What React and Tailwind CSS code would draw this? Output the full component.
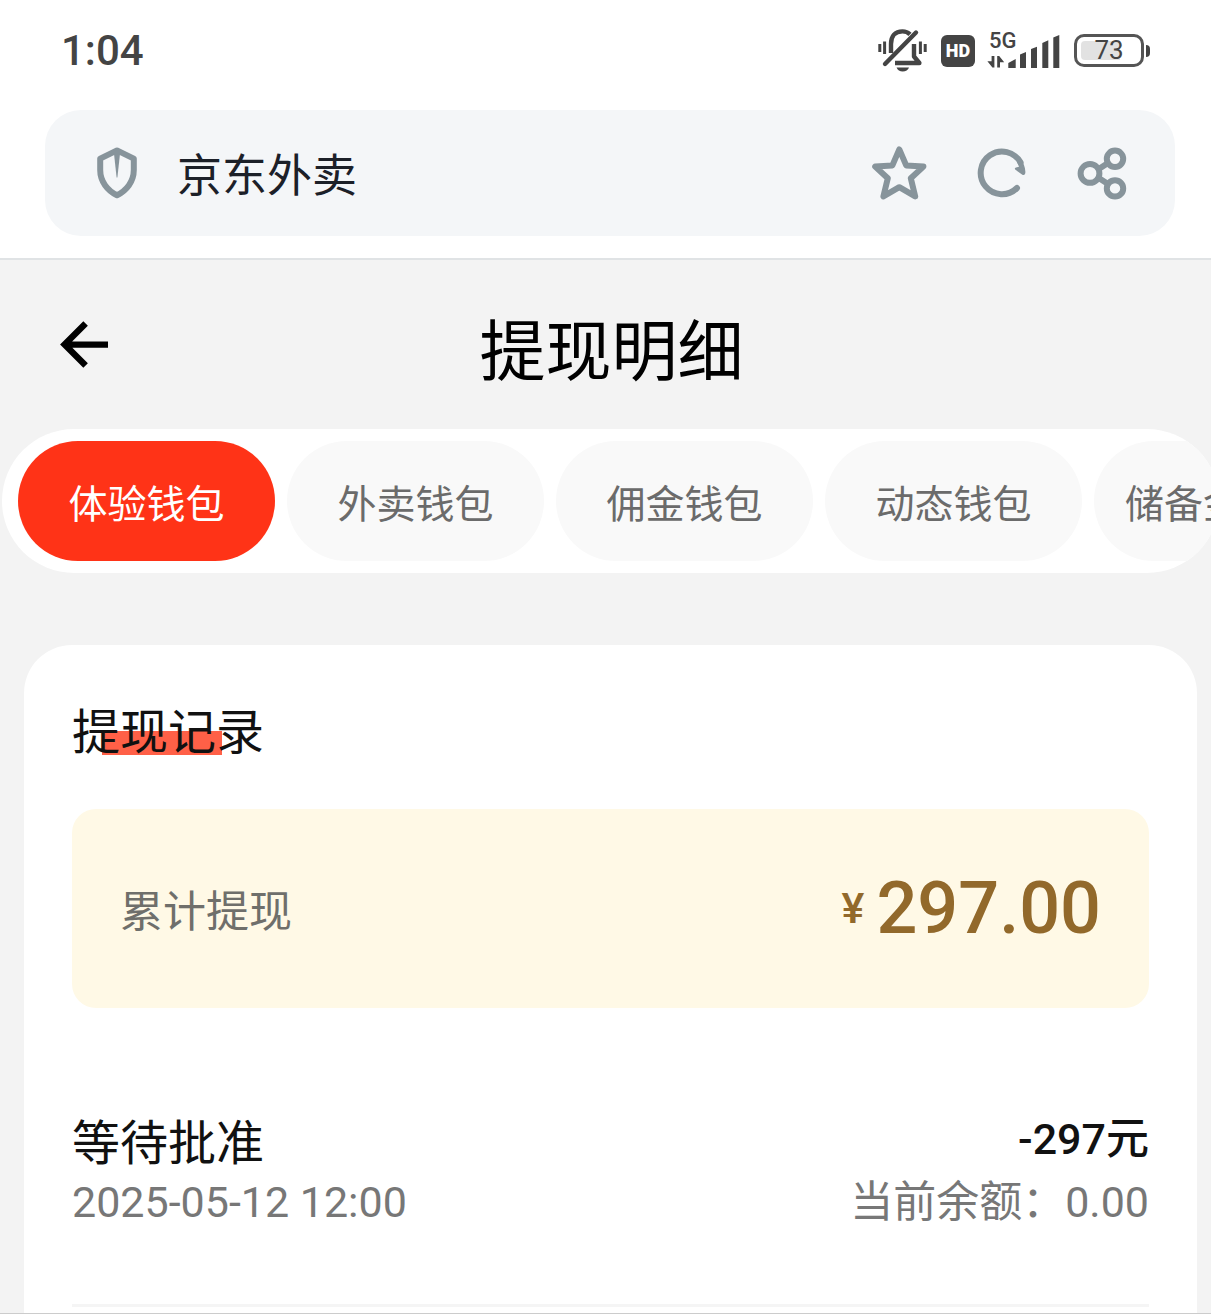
import { useState } from "react";

const wallets = ["体验钱包", "外卖钱包", "佣金钱包", "动态钱包", "储备金钱包"];

const records = [
  {
    id: 1,
    status: "等待批准",
    time: "2025-05-12 12:00",
    amount: "-297元",
    balance: "0.00",
  },
];

function MutedBellIcon() {
  return (
    <svg width="50" height="46" viewBox="0 0 50 46" fill="none" stroke="currentColor" strokeWidth="4.4" aria-hidden="true">
      <path d="M14 25V16C14 8 18 3.4 25.5 3.4C28.6 3.4 31 4.4 33 6.4" />
      <path d="M8 36L39 4.5" strokeLinecap="round" />
      <path d="M18 35H42.4L37 28.5V16" strokeLinejoin="round" />
      <path d="M19.5 39.5H32C31 42.2 28.8 43.6 25.7 43.6C22.7 43.6 20.6 42.2 19.5 39.5Z" fill="currentColor" stroke="none" />
      <path d="M7.6 13.5V26M43.4 13.5V26" strokeWidth="3" />
      <path d="M2.8 16V24M48.2 16V24" strokeWidth="3" />
    </svg>
  );
}

function SignalIcon() {
  return (
    <svg width="73" height="38" viewBox="0 0 73 38" fill="currentColor" aria-hidden="true">
      <path d="M21.3 31L28.7 27V36H21.3ZM33 22.5L39 20V36H33ZM44 17L50 14.7V36H44ZM55.3 11L61.3 8.3V36H55.3ZM66.3 5.5L72.3 3V36H66.3Z" />
      <path d="M4.6 24H7.4V35.5H5.4L0.4 29.2H4.6ZM10.2 24H12.2L17.2 30.3H13V35.5H10.2Z" />
    </svg>
  );
}

function ShieldIcon() {
  return (
    <svg width="40" height="52" viewBox="0 0 40 52" fill="none" stroke="currentColor" aria-hidden="true">
      <path d="M20 3.4L36.8 11.6V23C36.8 34.5 29.5 43.5 20 48.2C10.5 43.5 3.2 34.5 3.2 23V11.6Z" strokeWidth="6" strokeLinejoin="round" />
      <path d="M16.8 5H23.2L20.4 30.5H19.6Z" fill="currentColor" stroke="none" />
    </svg>
  );
}

function StarIcon() {
  return (
    <svg width="55" height="54" viewBox="0 0 55 54" fill="none" stroke="currentColor" strokeWidth="6" strokeLinejoin="round" aria-hidden="true">
      <path d="M27.3 3.4L34.2 19.4L51.4 20.6L38.8 32.2L43.2 50.4L27.3 41.2L11.4 50.4L15.8 32.2L3.2 20.6L20.4 19.4Z" />
    </svg>
  );
}

function RefreshIcon() {
  return (
    <svg width="50" height="50" viewBox="0 0 50 50" fill="none" stroke="currentColor" aria-hidden="true">
      <path d="M40 40A21.3 21.3 0 1 1 43.6 14.5" strokeWidth="6" strokeLinecap="round" />
      <path d="M43.5 10.5C46.4 14.5 48.2 19 48.4 24C48.4 26.8 46.8 27.6 45 26.4L38.4 21.8C37.4 20.8 37.8 19.6 39 19.4L42 18.8L40 14Z" fill="currentColor" stroke="none" />
    </svg>
  );
}

function ShareIcon() {
  return (
    <svg width="50" height="53" viewBox="0 0 50 53" fill="none" stroke="currentColor" strokeWidth="6" aria-hidden="true">
      <circle cx="13" cy="26.4" r="9.4" />
      <circle cx="38" cy="11.8" r="8.2" />
      <circle cx="38" cy="41.4" r="8.2" />
      <path d="M21 22.5L31 16M21 30.5L31 37" />
    </svg>
  );
}

function BackIcon() {
  return (
    <svg width="48" height="48" viewBox="0 0 48 48" fill="none" stroke="currentColor" strokeWidth="6.4" aria-hidden="true">
      <path d="M25.6 2.6L4.6 23.6L25.6 44.6M5 23.6H48" />
    </svg>
  );
}

function StatusBar() {
  return (
    <div className="flex h-[110px] items-center justify-between px-[61px] pt-[3px] pb-3 font-['Roboto'] text-[#444]">
      <span className="text-[42px] font-medium">1:04</span>
      <div className="flex items-center">
        <MutedBellIcon />
        <span className="ml-[14px] flex h-8 w-[34px] items-center justify-center rounded-md bg-[#444] text-[18px] font-black text-white">
          HD
        </span>
        <div className="relative ml-3">
          <SignalIcon />
          <span className="absolute -top-px left-[2px] text-[22px] leading-5 font-medium">5G</span>
        </div>
        <span className="ml-[14px] flex h-[33px] w-[70px] items-center rounded-[10px] border-3 border-[#555] p-1">
          <span className="flex h-full w-full items-center justify-center rounded-[4px] bg-linear-to-r from-[#e2e2e2] from-70% to-white to-70% text-[26px]">
            73
          </span>
        </span>
        <span className="ml-[2px] h-3 w-1 rounded-r-sm bg-[#444]"></span>
      </div>
    </div>
  );
}

function AddressBar() {
  return (
    <div className="border-b-2 border-[#e0e3e5] px-9 pb-[22px] pl-[45px]">
      <div className="flex h-[126px] items-center rounded-[36px] bg-[#f4f6f8] pr-12 pl-[52px] text-[#87949b]">
        <ShieldIcon />
        <input
          type="text"
          aria-label="地址栏"
          defaultValue="京东外卖"
          className="ml-10 min-w-0 flex-1 bg-transparent text-[45px] text-[#1c2028] outline-none"
        />
        <div className="flex items-center gap-[50px]">
          <button aria-label="收藏">
            <StarIcon />
          </button>
          <button aria-label="刷新">
            <RefreshIcon />
          </button>
          <button aria-label="分享">
            <ShareIcon />
          </button>
        </div>
      </div>
    </div>
  );
}

function WalletTabs() {
  const [active, setActive] = useState(wallets[0]);

  return (
    <div className="overflow-hidden">
      <div className="-mr-2 ml-[2px] flex gap-3 overflow-hidden rounded-[72px] bg-white px-4 py-3">
        {wallets.map((name) => (
          <button
            key={name}
            onClick={() => setActive(name)}
            className={`h-[120px] w-[257px] shrink-0 rounded-full text-[39px] ${
              active === name ? "bg-[#ff3317] text-white" : "bg-[#f9f9f9] text-[#6b6b6b]"
            }`}
          >
            {name}
          </button>
        ))}
      </div>
    </div>
  );
}

function RecordRow({ record }) {
  return (
    <li className="flex items-center justify-between border-b-3 border-[#f5f5f5] pt-[100px] pb-[70px] leading-[63px]">
      <div>
        <p className="text-[48px] text-[#111]">{record.status}</p>
        <p className="font-['Roboto'] text-[43px] text-[#777]">{record.time}</p>
      </div>
      <div className="text-right font-['Roboto','Noto_Sans_CJK_SC',sans-serif] text-[43px]">
        <p className="font-medium text-[#111]">{record.amount}</p>
        <p className="text-[#777]">当前余额：{record.balance}</p>
      </div>
    </li>
  );
}

function App() {
  return (
    <div className="flex min-h-screen flex-col border-b border-[#ccc] bg-[#f3f3f3] font-['Noto_Sans_CJK_SC','Roboto',sans-serif]">
      <header className="bg-white">
        <StatusBar />
        <AddressBar />
      </header>

      <div className="flex h-[169px] items-center pr-12 pl-[60px]">
        <button aria-label="返回" className="text-black">
          <BackIcon />
        </button>
        <h1 className="flex-1 pt-1 text-center text-[66px] text-black">提现明细</h1>
        <span className="w-12"></span>
      </div>

      <WalletTabs />

      <main className="mt-[72px] mr-[14px] ml-6 flex-1 rounded-t-[48px] bg-white px-12 pt-12">
        <h2 className="relative text-[48px] leading-[70px] text-[#111]">
          <span className="absolute bottom-2 left-[30px] h-6 w-[120px] bg-[#ff6047]"></span>
          <span className="relative">提现记录</span>
        </h2>

        <div className="mt-[46px] flex h-[199px] items-center justify-between rounded-3xl bg-[#fff9e6] px-12">
          <span className="text-[43px] text-[#6f6f6b]">累计提现</span>
          <span className="flex items-center gap-3 font-['Roboto'] font-medium text-[#92692b]">
            <span className="text-[43px]">¥</span>
            <span className="text-[72px]">297.00</span>
          </span>
        </div>

        <ul>
          {records.map((record) => (
            <RecordRow key={record.id} record={record} />
          ))}
        </ul>
      </main>
    </div>
  );
}

export default App;
